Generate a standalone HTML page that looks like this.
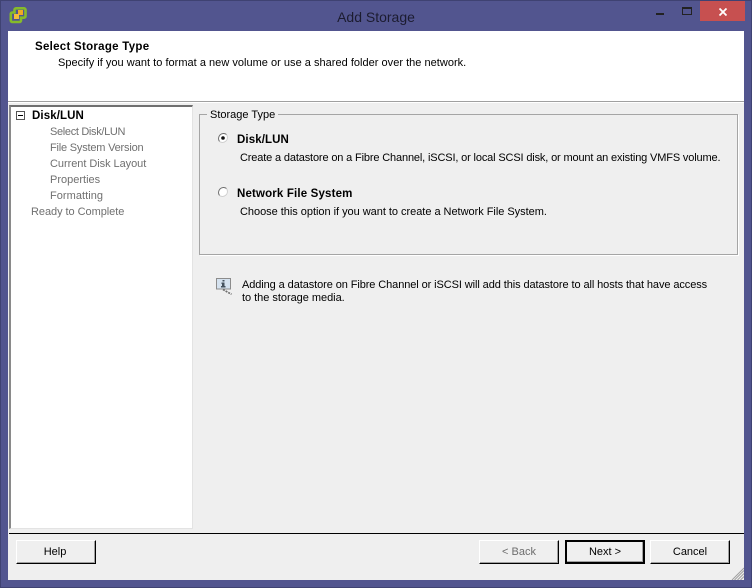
<!DOCTYPE html>
<html><head><meta charset="utf-8">
<style>
html,body{margin:0;padding:0;width:752px;height:588px;overflow:hidden;background:#52558f}
*{box-sizing:border-box}
.a{position:absolute}
.t{position:absolute;white-space:nowrap;font:11px/13px "Liberation Sans",sans-serif;color:#000}
.b{font-weight:bold;font-size:11.5px}
.g{color:#707070}
.btn{position:absolute;top:540px;height:24px;background:#efefef;border:1px solid;border-color:#fff #000 #000 #fff;box-shadow:inset -1px -1px 0 #a0a0a0;text-align:center;font:11px/23px "Liberation Sans",sans-serif;color:#000}
</style></head><body>
<div class="a" style="left:0;top:0;width:752px;height:588px;background:#52558f;border:1px solid #3f4272"></div>
<svg class="a" style="left:9px;top:6px" width="18" height="18" viewBox="0 0 18 18">
<path d="M7 2.300h8a1.500 1.500 0 0 1 1.500 1.500v6.400a1.500 1.500 0 0 1-1.500 1.500h-3v2.800a1.500 1.500 0 0 1-1.500 1.500H3.300a1.500 1.500 0 0 1-1.500-1.500V8a1.500 1.500 0 0 1 1.500-1.500h2.200V3.800A1.500 1.500 0 0 1 7 2.300z" fill="#52558f" stroke="#86bb2a" stroke-width="2.600"/>
<rect x="9" y="4" width="5" height="5" fill="#f0aa22"/><rect x="5" y="8" width="5" height="5" fill="#f5bc38"/>
</svg>
<div class="t" style="left:0;top:8px;width:752px;text-align:center;font-size:14px;line-height:18px;color:#1c1c30">Add Storage</div>
<div class="a" style="left:656px;top:13px;width:8px;height:2px;background:#222"></div>
<div class="a" style="left:682px;top:7px;width:10px;height:8px;border:1px solid #222;border-top-width:2px"></div>
<div class="a" style="left:700px;top:1px;width:45px;height:20px;background:#c75050"></div>
<svg class="a" style="left:719px;top:8px" width="8" height="8" viewBox="0 0 8 8"><path d="M.5.500l7 7M7.500.500l-7 7" stroke="#fff" stroke-width="1.800"/></svg>

<div class="a" style="left:8px;top:31px;width:736px;height:549px;background:#efefef"></div>
<div class="a" style="left:8px;top:31px;width:736px;height:70px;background:#fff"></div>
<div class="a" style="left:8px;top:101px;width:736px;height:1px;background:#a0a0a0"></div>
<div class="a" style="left:8px;top:102px;width:736px;height:1px;background:#fff"></div>
<div class="t b" style="left:35px;top:41px;letter-spacing:.28px">Select Storage Type</div>
<div class="t" style="left:58px;top:57px;letter-spacing:.02px">Specify if you want to format a new volume or use a shared folder over the network.</div>

<div class="a" style="left:9px;top:105px;width:184px;height:424px;background:#fff;border:1px solid #e3e3e3;border-top:2px solid #6f6f6f;border-left:2px solid #8a8a8a"></div>
<div class="a" style="left:16px;top:111px;width:9px;height:9px;border:1px solid #555;background:#fff"></div>
<div class="a" style="left:18px;top:115px;width:5px;height:1px;background:#000"></div>
<div class="t b" style="left:32px;top:110px;letter-spacing:.1px">Disk/LUN</div>
<div class="t g" style="left:50px;top:126px;letter-spacing:-.33px">Select Disk/LUN</div>
<div class="t g" style="left:50px;top:142px;letter-spacing:-.2px">File System Version</div>
<div class="t g" style="left:50px;top:158px;letter-spacing:-.05px">Current Disk Layout</div>
<div class="t g" style="left:50px;top:174px">Properties</div>
<div class="t g" style="left:50px;top:190px;letter-spacing:.05px">Formatting</div>
<div class="t g" style="left:31px;top:206px;letter-spacing:-.05px">Ready to Complete</div>

<div class="a" style="left:199px;top:114px;width:539px;height:141px;border:1px solid #a5a5a5;box-shadow:1px 1px 0 #fff"></div>
<div class="t" style="left:207px;top:109px;padding:0 3px;background:#efefef">Storage Type</div>

<svg class="a" style="left:217px;top:132px" width="12" height="12" viewBox="0 0 12 12"><circle cx="6" cy="6" r="5" fill="#fff"/><path d="M2.500 9.500A5 5 0 0 1 9.500 2.500" fill="none" stroke="#6e6e6e"/><path d="M9.500 2.500A5 5 0 0 1 2.500 9.500" fill="none" stroke="#cfcfcf"/><circle cx="6" cy="6" r="1.800" fill="#111"/></svg>
<div class="t b" style="left:237px;top:134px;letter-spacing:.1px">Disk/LUN</div>
<div class="t" style="left:240px;top:152px;letter-spacing:-.15px">Create a datastore on a Fibre Channel, iSCSI, or local SCSI disk, or mount an existing VMFS volume.</div>
<svg class="a" style="left:217px;top:186px" width="12" height="12" viewBox="0 0 12 12"><circle cx="6" cy="6" r="5" fill="#fff"/><path d="M2.500 9.500A5 5 0 0 1 9.500 2.500" fill="none" stroke="#6e6e6e"/><path d="M9.500 2.500A5 5 0 0 1 2.500 9.500" fill="none" stroke="#cfcfcf"/></svg>
<div class="t b" style="left:237px;top:188px;letter-spacing:.16px">Network File System</div>
<div class="t" style="left:240px;top:206px;letter-spacing:-.03px">Choose this option if you want to create a Network File System.</div>

<svg class="a" style="left:215px;top:277px" width="19" height="18" viewBox="0 0 19 18">
<path d="M1.500 1.500h14v10.500H1.500z" fill="#d5e2ef" stroke="#8c8c8c"/>
<path d="M8 12.500l8.500 4.800" stroke="#6f6f6f" stroke-width="1.700" stroke-dasharray="2 1"/>
<path d="M7.500 3h2v1.500h-2zM6.500 5.500h3V9h1v1.500h-4.500V9h1V7h-.5z" fill="#45525e"/>
</svg>
<div class="t" style="left:242px;top:279px;letter-spacing:-.09px">Adding a datastore on Fibre Channel or iSCSI will add this datastore to all hosts that have access</div>
<div class="t" style="left:242px;top:292px;letter-spacing:-.03px">to the storage media.</div>

<div class="a" style="left:9px;top:533px;width:735px;height:1px;background:#000"></div>
<div class="btn" style="left:16px;width:80px;padding-right:2px">Help</div>
<div class="btn" style="left:479px;width:80px;color:#6d6d6d">&lt; Back</div>
<div class="btn" style="left:565px;width:80px;border:2px solid #000;box-shadow:inset -1px -1px 0 #a0a0a0;line-height:21px">Next &gt;</div>
<div class="btn" style="left:650px;width:80px">Cancel</div>
<svg class="a" style="left:731px;top:567px" width="13" height="13" viewBox="0 0 13 13"><path d="M13 1L1 13M13 3.500L3.500 13M13 6.500L6.500 13M13 9.500L9.500 13" stroke="#a0a0a0" stroke-width="1"/></svg>
</body></html>
